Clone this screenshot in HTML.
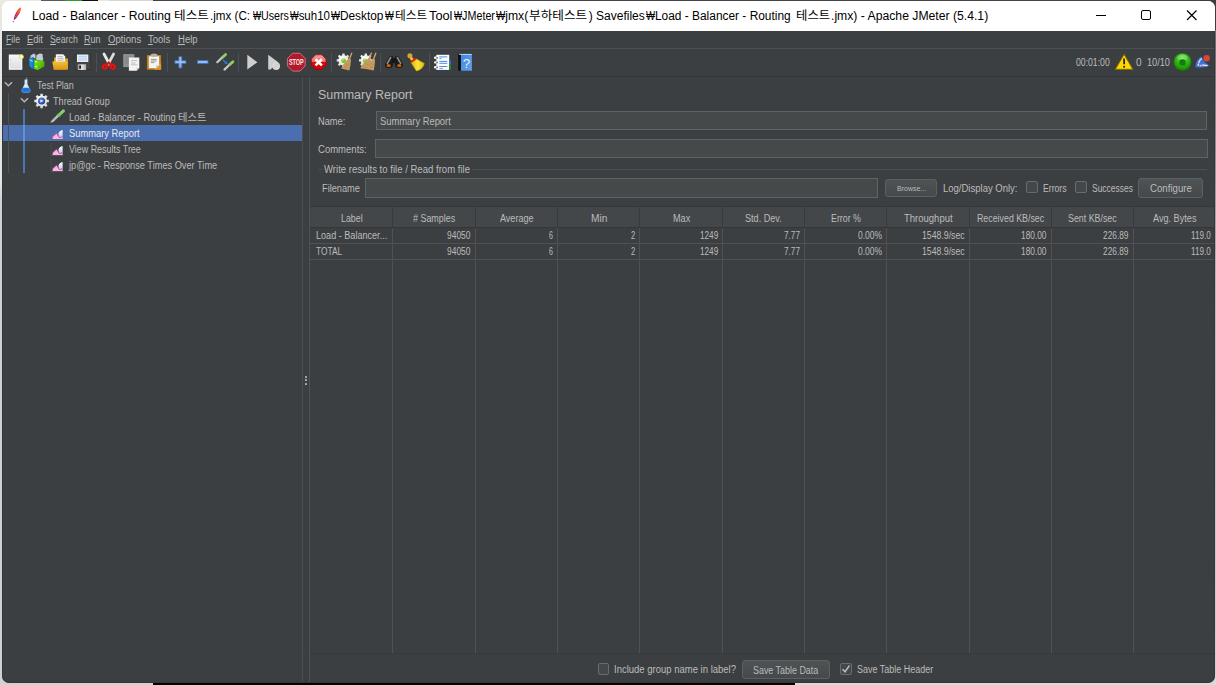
<!DOCTYPE html>
<html lang="ko"><head><meta charset="utf-8"><title>Apache JMeter</title>
<style>
html,body{margin:0;padding:0}
body{width:1216px;height:685px;overflow:hidden;position:relative;background:#e9e6dc;font-family:"Liberation Sans","Noto Sans CJK KR",sans-serif;font-size:10px;color:#bbbbbb}
#win{position:absolute;left:2px;top:1px;width:1213px;height:682px;border-radius:7px;background:linear-gradient(#fff 0,#fff 30px,#3c3f41 30px);overflow:hidden}
#in{position:absolute;left:-2px;top:-1px;width:1216px;height:685px}
#in div,#in span,#in svg{position:absolute}
.t{white-space:nowrap;line-height:12px;height:12px;margin-top:-9px;font-size:10px;transform-origin:0 0}
.h{white-space:nowrap;line-height:16px;height:16px;margin-top:-12px;font-size:12.5px;transform-origin:0 0}
.s{white-space:nowrap;line-height:10px;height:10px;margin-top:-8px;font-size:8px;transform-origin:0 0}
.tt{white-space:nowrap;line-height:16px;height:16px;margin-top:-12.5px;font-size:12px;color:#000;transform-origin:0 0}
.fld{background:#45494a;border:1px solid #606365;box-sizing:border-box}
.btn{box-sizing:border-box;border:1px solid #5e6060;border-radius:3px;background:linear-gradient(#4e5355,#45494b)}
.cb{box-sizing:border-box;border:1px solid #6b6b6b;border-radius:2px;background:#43494a;width:12px;height:12px}
.vl{width:1px;background:#4f5254}
.hl{height:1px;background:#4f5254}
.sep{width:1px;background:#4c4f51;top:53px;height:19px}
u{text-decoration:underline;text-underline-offset:1px}
.w{font-style:normal;display:inline-block;transform:scaleX(.8);transform-origin:0 50%;margin-right:-2.3px}
</style></head>
<body>
<div style="position:absolute;left:0;top:0;width:1216px;height:2px;background:linear-gradient(90deg,#ebe8dc 0,#ebe8dc 41px,#5a5a5a 41px,#5a5a5a 65px,#2c9a3c 65px,#2c9a3c 82px,#111 82px,#111 98px,#ebe8dc 98px,#ebe8dc 109px,#d6d6d6 109px,#d6d6d6 153px,#414446 153px,#414446 100%)"></div>
<div style="position:absolute;left:0;top:2px;width:4px;height:683px;background:linear-gradient(#e8e8e4 0,#e4e4e2 180px,#d0d0d0 200px,#d0d0d0 100%)"></div>
<div style="position:absolute;left:0;top:0;width:12px;height:12px;background:#ebe8dc"></div>
<div style="position:absolute;left:1200px;top:0;width:16px;height:30px;background:#3b3e40"></div>
<div style="position:absolute;left:1214px;top:30px;width:2px;height:655px;background:linear-gradient(#6a6d6f,#b8b8b8 40%,#cfcfcf)"></div>
<div style="position:absolute;left:0;top:675px;width:153px;height:10px;background:#d2d2d2"></div>
<div style="position:absolute;left:153px;top:675px;width:642px;height:10px;background:#000"></div>
<div style="position:absolute;left:795px;top:675px;width:421px;height:10px;background:#dadada"></div>
<div id="win"><div id="in">
<div style="left:0;top:0;width:1216px;height:31px;background:#fff"></div>
<svg style="left:11px;top:6px" width="14" height="20" viewBox="0 0 14 20"><defs><linearGradient id="fg" x1="1" y1="0" x2="0" y2="1"><stop offset="0" stop-color="#f7941e"/><stop offset="0.45" stop-color="#e2263a"/><stop offset="1" stop-color="#7b2a8c"/></linearGradient></defs><path d="M9.7 1.5 C10.7 1.9 9.7 5 8.1 8 C6.7 10.6 5 12.7 3.4 13.9 L2.7 13.3 C3.1 10.6 4.4 7.6 6 5 C7.2 3.1 8.9 1.2 9.7 1.5 Z" fill="url(#fg)"/><path d="M4 10.4l2.4 1M4.8 8.4l2.6 1M5.8 6.4l2.6 1M6.8 4.6l2.4 0.9" stroke="#fff" stroke-opacity="0.55" stroke-width="0.5"/><circle cx="2.3" cy="15.6" r="0.65" fill="#7b2a8c"/></svg>
<span class="tt" style="left:31.5px;top:20px;transform:scaleX(1.0143);">Load - Balancer - Routing</span>
<span class="tt" style="left:174.25px;top:20px;transform:scaleX(1.0551);">테스트</span>
<span class="tt" style="left:210.2px;top:20px;transform:scaleX(0.9679);">.jmx (C:</span>
<span class="tt" style="left:252.5px;top:20px;transform:scaleX(0.8904);"><i class="w">₩</i>Users</span>
<span class="tt" style="left:289.8px;top:20px;transform:scaleX(0.956);"><i class="w">₩</i>suh10</span>
<span class="tt" style="left:331px;top:20px;transform:scaleX(0.9885);"><i class="w">₩</i>Desktop</span>
<span class="tt" style="left:385px;top:20px;transform:scaleX(0.9633);"><i class="w">₩</i></span>
<span class="tt" style="left:395px;top:20px;transform:scaleX(0.9721);">테스트</span>
<span class="tt" style="left:428.75px;top:20px;transform:scaleX(1.0652);">Tool</span>
<span class="tt" style="left:453.75px;top:20px;transform:scaleX(0.8957);"><i class="w">₩</i>JMeter</span>
<span class="tt" style="left:496px;top:20px;transform:scaleX(1.0157);"><i class="w">₩</i>jmx(</span>
<span class="tt" style="left:529px;top:20px;transform:scaleX(1.0543);">부하테스트</span>
<span class="tt" style="left:588.75px;top:20px;">) Savefiles</span>
<span class="tt" style="left:645.6px;top:20px;transform:scaleX(0.9926);"><i class="w">₩</i>Load - Balancer - Routing</span>
<span class="tt" style="left:795.5px;top:20px;transform:scaleX(1.0325);">테스트</span>
<span class="tt" style="left:830.7px;top:20px;transform:scaleX(1.016);">.jmx) - Apache JMeter (5.4.1)</span>
<svg style="left:1090px;top:5px" width="115" height="22" viewBox="1090 5 115 22"><path d="M1096 15.5h10" stroke="#000" stroke-width="1"/><rect x="1141.5" y="10.5" width="9" height="9" rx="1.5" fill="none" stroke="#000" stroke-width="1"/><path d="M1187 10.5l9.5 9.5M1196.5 10.5l-9.5 9.5" stroke="#000" stroke-width="1.2"/></svg>
<span class="t" style="left:5.5px;top:43px;transform:scaleX(0.8651);"><u>F</u>ile</span>
<span class="t" style="left:26.9px;top:43px;transform:scaleX(0.9226);"><u>E</u>dit</span>
<span class="t" style="left:50px;top:43px;transform:scaleX(0.8773);"><u>S</u>earch</span>
<span class="t" style="left:84.4px;top:43px;transform:scaleX(0.9014);"><u>R</u>un</span>
<span class="t" style="left:107.75px;top:43px;transform:scaleX(0.9632);"><u>O</u>ptions</span>
<span class="t" style="left:148.1px;top:43px;transform:scaleX(0.9504);"><u>T</u>ools</span>
<span class="t" style="left:178.1px;top:43px;transform:scaleX(0.9517);"><u>H</u>elp</span>
<div class="hl" style="left:0;top:48px;width:1216px;background:#4d5052"></div>
<div class="hl" style="left:0;top:76px;width:1216px;background:#323537"></div>
<div class="sep" style="left:96px"></div>
<div class="sep" style="left:167px"></div>
<div class="sep" style="left:238px"></div>
<div class="sep" style="left:331px"></div>
<div class="sep" style="left:380px"></div>
<div class="sep" style="left:429px"></div>
<svg style="left:0;top:49px" width="480" height="27" viewBox="0 49 480 27">
<defs>
<linearGradient id="gPage" x1="0" y1="0" x2="0" y2="1"><stop offset="0" stop-color="#f6f6f6"/><stop offset="1" stop-color="#dedede"/></linearGradient>
<radialGradient id="gStar"><stop offset="0" stop-color="#ffffff"/><stop offset="0.3" stop-color="#fff6b8"/><stop offset="0.7" stop-color="#f4de62"/><stop offset="1" stop-color="#ead458" stop-opacity="0"/></radialGradient>
<linearGradient id="gFold" x1="0" y1="0" x2="0" y2="1"><stop offset="0" stop-color="#f3c045"/><stop offset="1" stop-color="#d8960c"/></linearGradient>
<linearGradient id="gBlue" x1="0" y1="0" x2="1" y2="0"><stop offset="0" stop-color="#1fa0e8"/><stop offset="1" stop-color="#1468c0"/></linearGradient>
<linearGradient id="gGreen" x1="0" y1="0" x2="1" y2="1"><stop offset="0" stop-color="#7fe000"/><stop offset="1" stop-color="#2f9a08"/></linearGradient>
<linearGradient id="gSilver" x1="0" y1="0" x2="1" y2="0"><stop offset="0" stop-color="#9a9a9a"/><stop offset="0.5" stop-color="#e6e6e6"/><stop offset="1" stop-color="#b0b0b0"/></linearGradient>
<linearGradient id="gPlus" x1="0" y1="0" x2="0" y2="1"><stop offset="0" stop-color="#a9c8f2"/><stop offset="1" stop-color="#8ab2e8"/></linearGradient>
<linearGradient id="gRedX" x1="0" y1="0" x2="0" y2="1"><stop offset="0" stop-color="#f6a0a0"/><stop offset="0.48" stop-color="#ee6a6a"/><stop offset="0.52" stop-color="#dc0a0a"/><stop offset="1" stop-color="#d80000"/></linearGradient>
<linearGradient id="gGlass" x1="0" y1="0" x2="1" y2="1"><stop offset="0" stop-color="#f4f4f4"/><stop offset="1" stop-color="#9c9c9c"/></linearGradient>
<linearGradient id="gYel" x1="0" y1="0" x2="1" y2="0"><stop offset="0" stop-color="#d8b400"/><stop offset="0.5" stop-color="#fae43a"/><stop offset="1" stop-color="#e0be10"/></linearGradient>
<linearGradient id="gHelp" x1="0" y1="0" x2="1" y2="1"><stop offset="0" stop-color="#3f86dc"/><stop offset="1" stop-color="#62a2ec"/></linearGradient>
<radialGradient id="gGear" cx="0.4" cy="0.35" r="0.7"><stop offset="0" stop-color="#ffffff"/><stop offset="1" stop-color="#d4d4d4"/></radialGradient>
<radialGradient id="gGball" cx="0.4" cy="0.3" r="0.7"><stop offset="0" stop-color="#b8f060"/><stop offset="1" stop-color="#48b000"/></radialGradient>
</defs>
<!-- 1 new -->
<rect x="8.8" y="54.5" width="13.5" height="15.3" fill="#fafafa"/><rect x="9.7" y="55.4" width="11.7" height="13.2" fill="url(#gPage)"/>
<circle cx="10.6" cy="60" r="0.6" fill="#b8b8b8"/><circle cx="10.6" cy="64" r="0.6" fill="#b8b8b8"/>
<circle cx="21.4" cy="56.8" r="2.8" fill="url(#gStar)"/>
<!-- 2 templates (books) -->
<path d="M40 56.4 L43.2 57.4 L43.2 61.4 L40 60.6 Z" fill="#4aa6e6"/><path d="M30.3 58 L30.6 55.4 L33.8 53.5 L35.4 54.6 L35.6 58.8 L33 57.4 Z" fill="#c6cbcf"/><path d="M36.2 59.8 L36.4 55.2 L39.6 53.5 L42.6 54 L42.8 60.6 L38.2 60.2 Z" fill="#c6cbcf"/>
<path d="M29.1 58.4 L33 57.2 L34.7 58.2 L34.7 69.2 L31 67.8 L29.7 66 Z" fill="url(#gBlue)"/>
<path d="M30.2 59.6l2.4 1.2v1l-2.4-1.2z" fill="#d8efff"/>
<path d="M34.2 59.4 L38.1 60.2 L38.1 70 L34.2 69 Z" fill="#62d808"/>
<path d="M38.1 60.2 L44.4 61.6 L44.4 66.4 L38.1 70 Z" fill="url(#gGreen)"/>
<path d="M35 61l2.2 0.4v1.2l-2.2-0.4zM35 66l2.2 0.4v0.9l-2.2-0.4z" fill="#e4ffc0"/>
<!-- 3 open folder -->
<path d="M54 57.4 h5 l1 1 h8 v11 h-14 z" fill="#e0a21a"/>
<path d="M55.8 54.2 h7.4 l2 2.2 v6 h-9.4 z" fill="#f6f6f6"/>
<path d="M57.4 56.6h5.6M57.4 58.4h6.2M57.4 60.2h6.2" stroke="#a8a8a8" stroke-width="0.8"/>
<path d="M52.3 61.5 h14.6 l0.6 1 l-0.8 7.3 h-13 z" fill="url(#gFold)"/>
<!-- 4 save floppy -->
<path d="M75 54.2 h15 l0.9 0.9 v14.7 h-15.9 z" fill="#454545"/>
<path d="M75 54.2 h15 l0.9 0.9 v14.7 h-15.9 z" fill="none" stroke="#2e2e2e" stroke-width="0.6"/>
<rect x="77" y="54.5" width="11.3" height="7.5" fill="#e6eff9"/>
<path d="M78.4 56.4h8.6M78.4 58.2h8.6M78.4 60h8.6" stroke="#a9c4e2" stroke-width="0.8"/>
<rect x="77.8" y="64.3" width="8.3" height="5.7" fill="url(#gSilver)"/>
<rect x="79.2" y="65.5" width="1.8" height="3.2" rx="0.6" fill="#161616"/>
<!-- 5 cut -->
<path d="M104 54 L109.4 64" stroke="#e8e8e8" stroke-width="2.7" stroke-linecap="round"/>
<path d="M113.6 54 L108.2 64" stroke="#dcdcdc" stroke-width="2.7" stroke-linecap="round"/>
<ellipse cx="105" cy="66.7" rx="2.2" ry="1.8" transform="rotate(-35 105 66.7)" fill="#7a1a1a" stroke="#e01414" stroke-width="2.3"/>
<ellipse cx="112.6" cy="66.7" rx="2.2" ry="1.8" transform="rotate(35 112.6 66.7)" fill="#7a1a1a" stroke="#e01414" stroke-width="2.3"/>
<path d="M106.8 64.8 L108.8 62.6 L110.8 64.8" fill="none" stroke="#e01414" stroke-width="2.2"/>
<!-- 6 copy -->
<rect x="123.2" y="54.1" width="11.1" height="13" fill="#8f9293"/>
<path d="M124.8 57h8M124.8 59h8M124.8 61h8M124.8 63h8" stroke="#7e8182" stroke-width="0.8"/>
<path d="M128.9 57.4 h10.4 v10.6 l-2.6 2.7 h-7.8 z" fill="#f3f3f3"/>
<path d="M139.3 68 l-2.6 2.7 v-2.7 z" fill="#b8b8b8"/>
<path d="M131 60.6h6.2M131 63h4.6M131 64.8h6.2" stroke="#bdbdbd" stroke-width="1"/>
<!-- 7 paste -->
<rect x="146.9" y="55.1" width="14.2" height="14.7" rx="0.8" fill="#c07c12"/>
<path d="M161.1 63 v6.8 h-7 z" fill="#dc962a"/>
<path d="M148.8 56.2 h10.4 v9 l-3 3 h-7.4 z" fill="#f4f4f4"/>
<path d="M159.2 65.2 l-3 3 v-3 z" fill="#c8c8c0"/>
<path d="M150.8 59.4h5.8M150.8 61h5.8M150.8 62.6h3.6" stroke="#8c8c8c" stroke-width="0.9"/>
<ellipse cx="154" cy="55.2" rx="3.4" ry="1.6" fill="#b2b2a6"/>
<!-- 8 plus -->
<path d="M178.9 56.7 h2.9 v4 h4.2 v2.8 h-4.2 v4.4 h-2.9 v-4.4 h-4 v-2.8 h4 z" fill="url(#gPlus)" stroke="#3f70b8" stroke-width="0.9"/>
<!-- 9 minus -->
<rect x="197.4" y="60.6" width="10.6" height="3" fill="url(#gPlus)" stroke="#3f70b8" stroke-width="0.9"/>
<!-- 10 toggle -->
<path d="M217.3 62.2 L222.4 57.4" stroke="url(#gGlass)" stroke-width="2.2" stroke-linecap="round"/>
<path d="M222.6 57.2 L225.6 54.4" stroke="#8fcf60" stroke-width="2.8" stroke-linecap="round"/>
<path d="M224.5 69.6 L229.6 64.8" stroke="url(#gGlass)" stroke-width="2.2" stroke-linecap="round"/>
<path d="M229.8 64.6 L232.9 61.7" stroke="#8fcf60" stroke-width="2.8" stroke-linecap="round"/>
<path d="M223 60 L225.6 62.4" stroke="#3c82e0" stroke-width="1.1"/>
<path d="M227.6 64.2 L224.2 63.6 L226.8 60.8 Z" fill="#2a7ae4"/>
<!-- 11 play -->
<path d="M247.3 54.8 L257.4 62.2 L247.3 69.5 Z" fill="#cecece"/>
<!-- 12 play no pause -->
<path d="M268.2 54.8 L278 62 L271.6 68.4 L270.8 69.5 L268.2 69.5 Z" fill="#cecece"/>
<circle cx="276.1" cy="66" r="3.9" fill="#d6d6d6"/>
<path d="M273.6 68.2 L278.4 63.6" stroke="#c4c4c4" stroke-width="0.9"/>
<!-- 13 stop -->
<path d="M292.6 53.3 h7.4 l5.2 5.2 v7.4 l-5.2 5.2 h-7.4 l-5.2 -5.2 v-7.4 z" fill="#b2192b" stroke="#e2909a" stroke-width="0.7"/>
<text x="288.9" y="65.2" font-family="Liberation Sans, sans-serif" font-weight="bold" font-size="8.4" fill="#fbeaea" textLength="14.8" lengthAdjust="spacingAndGlyphs">STOP</text>
<!-- 14 shutdown -->
<path d="M315.6 54.8 h6.2 l4.2 4.2 v6.1 l-4.2 4.2 h-6.2 l-4.2 -4.2 v-6.1 z" fill="url(#gRedX)" stroke="#a80000" stroke-width="0.7"/>
<path d="M315.5 59.2 L321.9 65.4 M321.9 59.2 L315.5 65.4" stroke="#ffffff" stroke-width="2.6"/>
<!-- 15 clear -->
<path d="M342.4 53.6 L344.6 53.6 L344.7 55.3 L346.2 56.0 L347.6 54.8 L349.1 56.3 L347.9 57.7 L348.6 59.2 L350.3 59.3 L350.3 61.5 L348.6 61.6 L347.9 63.1 L349.1 64.5 L347.6 66.0 L346.2 64.8 L344.7 65.5 L344.6 67.2 L342.4 67.2 L342.3 65.5 L340.8 64.8 L339.4 66.0 L337.9 64.5 L339.1 63.1 L338.4 61.6 L336.7 61.5 L336.7 59.3 L338.4 59.2 L339.1 57.7 L337.9 56.3 L339.4 54.8 L340.8 56.0 L342.3 55.3 Z" fill="url(#gGear)"/>
<circle cx="343.5" cy="60.6" r="2.3" fill="url(#gGball)"/>
<path d="M351.7 53.2 L349.2 59.4" stroke="#caa26a" stroke-width="1.4" stroke-linecap="round"/>
<path d="M349 58.2 L350.8 59.4 L350.6 64 L349.4 70.6 L341.2 68.4 L343.6 64 L346.6 60.4 Z" fill="#c59c5e"/>
<path d="M344 66.5l4 1.2M345.6 63.6l3.6 1.4" stroke="#a9814a" stroke-width="0.6"/>
<!-- 16 clear all -->
<path d="M364.7 53.6 L366.9 53.6 L367.0 55.3 L368.5 56.0 L369.9 54.8 L371.4 56.3 L370.2 57.7 L370.9 59.2 L372.6 59.3 L372.6 61.5 L370.9 61.6 L370.2 63.1 L371.4 64.5 L369.9 66.0 L368.5 64.8 L367.0 65.5 L366.9 67.2 L364.7 67.2 L364.6 65.5 L363.1 64.8 L361.7 66.0 L360.2 64.5 L361.4 63.1 L360.7 61.6 L359.0 61.5 L359.0 59.3 L360.7 59.2 L361.4 57.7 L360.2 56.3 L361.7 54.8 L363.1 56.0 L364.6 55.3 Z" fill="url(#gGear)"/>
<circle cx="364.9" cy="60.6" r="2.2" fill="url(#gGball)"/>
<path d="M371.3 53.2 L368.9 59.4 M375.8 53.2 L373.4 59.4" stroke="#caa26a" stroke-width="1.4" stroke-linecap="round"/>
<path d="M368.6 58.2 L370.4 59.4 L371.8 61.2 L373 58.4 L375 59.6 L374.8 64 L373.8 70.6 L368.8 69.6 L360.2 68.2 L363.2 63.6 L366.2 60.4 Z" fill="#c59c5e"/>
<path d="M363.6 66.5l4 1.2M365.2 63.6l3.6 1.4M369.6 66.6l3.4 1M370.6 63.6l3 1" stroke="#a9814a" stroke-width="0.6"/>
<!-- 17 search binoculars -->
<path d="M389.6 56.2 L392.9 56.2 L393.7 61 L392.4 67 Q388.7 69.2 385.3 66.8 Q384.7 64.8 385.5 63.2 Z" fill="#1a1a1a"/>
<path d="M398.4 56.2 L395.1 56.2 L394.3 61 L395.6 67 Q399.3 69.2 402.7 66.8 Q403.3 64.8 402.5 63.2 Z" fill="#1a1a1a"/>
<rect x="392.3" y="58.2" width="3.4" height="4.6" fill="#151515"/>
<path d="M390.6 57.6 L387.4 63.4" stroke="#8e8e8e" stroke-width="1.7" stroke-linecap="round"/>
<path d="M397.4 57.6 L400.6 63.4" stroke="#8e8e8e" stroke-width="1.7" stroke-linecap="round"/>
<ellipse cx="388.7" cy="65.5" rx="2.1" ry="1.6" fill="#c8660c"/>
<ellipse cx="399.3" cy="65.5" rx="2.1" ry="1.6" fill="#c8660c"/>
<!-- 18 reset search broom -->
<path d="M411 62.4 L416 58.8 L424.3 63.5 Q423 69.4 416.4 71 Z" fill="url(#gYel)" stroke="#c8a400" stroke-width="0.6"/>
<path d="M409.4 57.6 L411.2 56.4 L414.4 59.4 L411.6 61.4 Z" fill="#f0d420"/>
<circle cx="409.9" cy="55.7" r="2.5" fill="#dea238"/>
<path d="M410.9 62 L415.9 58.5" stroke="#dc1c1c" stroke-width="2.1"/>
<!-- 19 function helper -->
<rect x="436.3" y="54.8" width="12.9" height="15.1" fill="#fdfdfd"/>
<rect x="449.2" y="60.5" width="1.8" height="4.1" fill="#2d6fd8"/>
<rect x="449.2" y="64.6" width="1.8" height="4.9" fill="#1f8a12"/>
<g fill="#f2f2f2"><rect x="434" y="56.6" width="3.2" height="2.4" rx="1"/><rect x="434" y="61.2" width="3.2" height="2.4" rx="1"/><rect x="434" y="66.1" width="3.2" height="2.4" rx="1"/></g>
<g fill="#222"><rect x="436.6" y="57" width="1" height="1.7"/><rect x="436.6" y="61.6" width="1" height="1.7"/><rect x="436.6" y="66.5" width="1" height="1.7"/></g>
<path d="M439.3 56.9h8M439.3 61.4h8M439.3 63.3h8M439.3 66.5h8" stroke="#4a8cee" stroke-width="1"/>
<path d="M439.3 58.4h2.4M439.3 68.4h3.8" stroke="#6aa2f2" stroke-width="1"/>
<!-- 20 help -->
<rect x="458.2" y="54" width="2.9" height="16.7" fill="#0c0c0c"/>
<rect x="460.9" y="54" width="11" height="16.7" fill="url(#gHelp)"/>
<path d="M459 54.4 h12.6" stroke="#dfe8f4" stroke-width="0.8"/>
<text x="462.8" y="68" font-family="Liberation Sans, sans-serif" font-size="13.5" fill="#e6f0ff">?</text>
</svg>
<svg style="left:1110px;top:49px" width="105" height="27" viewBox="1110 49 105 27">
<defs>
<radialGradient id="gGrn" cx="0.5" cy="0.3" r="0.75"><stop offset="0" stop-color="#6fe04a"/><stop offset="0.55" stop-color="#2fae12"/><stop offset="1" stop-color="#0e7a06"/></radialGradient>
</defs>
<path d="M1124.1 54.4 L1132.8 69.3 H1115.4 Z" fill="#ffd800" stroke="#8c6c00" stroke-width="1" stroke-linejoin="round"/>
<path d="M1124.1 58.6 v5.6" stroke="#1a1a1a" stroke-width="1.7"/><circle cx="1124.1" cy="66.7" r="1" fill="#1a1a1a"/>
<circle cx="1182.5" cy="61.9" r="8.9" fill="url(#gGrn)"/>
<circle cx="1182.5" cy="61.9" r="8.6" fill="none" stroke="#0f6e08" stroke-width="0.7"/>
<ellipse cx="1182.5" cy="57.6" rx="5.2" ry="3" fill="#ffffff" fill-opacity="0.22"/><circle cx="1182.5" cy="62.4" r="3.2" fill="#127c0d"/>
<path d="M1195.6 67.4 C1195.2 62.6 1198 58.4 1201.4 56.6 L1203.2 59.4 C1203.6 62 1207.6 64 1209.4 65.4 C1206 67.6 1200 67.8 1195.6 67.4 Z" fill="#3b74d6"/>
<path d="M1198 65.8 C1198.6 62 1200 59.6 1201.8 58.4 M1199.6 66 C1202 64.8 1205 65 1207.6 65.6" stroke="#e8eefc" stroke-width="1.2" fill="none"/>
<path d="M1197.4 62.6 L1203 66.6" stroke="#e05a6a" stroke-width="0.7"/>
<circle cx="1206.6" cy="58.3" r="3.2" fill="#dc4437"/>
</svg>

<span class="t" style="left:1076px;top:66px;transform:scaleX(0.8655);">00:01:00</span>
<span class="t" style="left:1136px;top:66px;">0</span>
<span class="t" style="left:1147px;top:66px;transform:scaleX(0.9149);">10/10</span>
<div style="left:0;top:125px;width:302px;height:16px;background:#4b6eaf"></div>
<div class="vl" style="left:7.5px;top:93px;height:79.5px;background:#505355"></div>
<div style="left:23.2px;top:108.5px;width:1.7px;height:64.5px;background:#4878ae"></div>
<div style="left:23.2px;top:125px;width:1.7px;height:16px;background:#5e94d4"></div>
<svg style="left:4px;top:81px" width="9" height="7" viewBox="0 0 9 7"><path d="M0.8 1.2L4.4 4.8L8 1.2" fill="none" stroke="#b4b4b4" stroke-width="1.5"/></svg>
<svg style="left:20px;top:97px" width="9" height="7" viewBox="0 0 9 7"><path d="M0.8 1.2L4.4 4.8L8 1.2" fill="none" stroke="#b4b4b4" stroke-width="1.5"/></svg>
<span class="t" style="left:37px;top:89px;transform:scaleX(0.8945);">Test Plan</span>
<span class="t" style="left:53px;top:105px;transform:scaleX(0.9106);">Thread Group</span>
<span class="t" style="left:68.5px;top:121px;transform:scaleX(0.9362);">Load - Balancer - Routing</span>
<span class="t" style="left:178.3px;top:121px;transform:scaleX(1.0286);">테스트</span>
<span class="t" style="left:68.5px;top:137px;color:#e6e9ef;transform:scaleX(0.9341);">Summary Report</span>
<span class="t" style="left:68.5px;top:153px;transform:scaleX(0.893);">View Results Tree</span>
<span class="t" style="left:68.5px;top:169px;transform:scaleX(0.9218);">jp@gc - Response Times Over Time</span>
<svg style="left:0;top:77px" width="80" height="100" viewBox="0 77 80 100">
<defs>
<linearGradient id="tGlass" x1="0" y1="0" x2="1" y2="1"><stop offset="0" stop-color="#f6f6f6"/><stop offset="1" stop-color="#8c8c8c"/></linearGradient>
<radialGradient id="tGear" cx="0.4" cy="0.35" r="0.7"><stop offset="0" stop-color="#ffffff"/><stop offset="1" stop-color="#d2d2d2"/></radialGradient>
<radialGradient id="tBlue" cx="0.4" cy="0.35" r="0.7"><stop offset="0" stop-color="#5a8ae0"/><stop offset="1" stop-color="#1c3f90"/></radialGradient>
</defs>
<!-- flask -->
<path d="M26.6 77.4 L26.9 79.6" stroke="#9a9a9a" stroke-width="0.8"/>
<path d="M24.6 79.4 h2.8 v4.6 l3 6.2 q0.4 2 -1.4 2.2 h-6 q-1.8 -0.2 -1.4 -2.2 l3 -6.2 z" fill="#d6e8f8"/>
<path d="M22.6 87.8 h6.8 l1 2.4 q0.4 2 -1.4 2.2 h-6 q-1.8 -0.2 -1.4 -2.2 z" fill="#1f7ae4"/>
<path d="M24.8 88.6 v2 M27.2 88.6 v2" stroke="#1458b8" stroke-width="0.8"/>
<!-- gear -->
<path d="M40.4 93.7 L42.8 93.7 L42.9 95.7 L44.5 96.3 L45.9 95.0 L47.6 96.7 L46.3 98.1 L46.9 99.7 L48.9 99.8 L48.9 102.2 L46.9 102.3 L46.3 103.9 L47.6 105.3 L45.9 107.0 L44.5 105.7 L42.9 106.3 L42.8 108.3 L40.4 108.3 L40.3 106.3 L38.7 105.7 L37.3 107.0 L35.6 105.3 L36.9 103.9 L36.3 102.3 L34.3 102.2 L34.3 99.8 L36.3 99.7 L36.9 98.1 L35.6 96.7 L37.3 95.0 L38.7 96.3 L40.3 95.7 Z" fill="url(#tGear)"/>
<circle cx="41.6" cy="101" r="3.6" fill="url(#tBlue)"/>
<path d="M40.4 99.4 L43.6 100.9 L40.4 102.6 Z" fill="#eef2fa"/>
<!-- dropper -->
<path d="M50.2 122.8 L51.8 120.2 L57.5 114.5 L59.3 116.3 L53.4 121.9 Z" fill="url(#tGlass)"/>
<path d="M57.2 113.9 L60 116.7" stroke="#58a845" stroke-width="1.5"/>
<path d="M59.4 114.7 L63.5 110.9" stroke="#7fcc62" stroke-width="3" stroke-linecap="round"/>
<path d="M61 112.4 L63 110.6" stroke="#a6e08e" stroke-width="1" stroke-linecap="round"/>
<path d="M53 118.6l1.5 1.5M54.6 117l1.5 1.5" stroke="#8a8a8a" stroke-width="0.5"/>
</svg>
<svg width="0" height="0" style="left:0;top:0"><defs><linearGradient id="lf" x1="0" y1="0" x2="0" y2="1"><stop offset="0" stop-color="#ffffff"/><stop offset="1" stop-color="#a6c8fa"/></linearGradient></defs></svg>
<svg style="left:50px;top:125px" width="15" height="16" viewBox="0 0 15 16"><path d="M1.1 2v12.6" stroke="#5d6164" stroke-opacity="0.8" stroke-width="0.8" stroke-dasharray="1 1"/><path d="M1 14.5h12.6" stroke="#6a6e72" stroke-opacity="0.7" stroke-width="0.7"/><path d="M8.3 9 C8.8 6.8 10.6 5.4 12.6 5 L12.6 12 L9.7 13.4 Z" fill="url(#lf)"/><path d="M2.7 14 L2.7 11.6 L6.4 8.2 L9.7 12.6 L12.6 11.2 L12.6 14 Z" fill="#fab4ea" stroke="#d23c86" stroke-width="0" /><path d="M2.7 11.8 L6.4 8.4 L9.7 12.8 L12.6 11.4" fill="none" stroke="#d8408c" stroke-width="0.9"/></svg>
<svg style="left:50px;top:141px" width="15" height="16" viewBox="0 0 15 16"><path d="M1.1 2v12.6" stroke="#5d6164" stroke-opacity="0.8" stroke-width="0.8" stroke-dasharray="1 1"/><path d="M1 14.5h12.6" stroke="#6a6e72" stroke-opacity="0.7" stroke-width="0.7"/><path d="M8.3 9 C8.8 6.8 10.6 5.4 12.6 5 L12.6 12 L9.7 13.4 Z" fill="url(#lf)"/><path d="M2.7 14 L2.7 11.6 L6.4 8.2 L9.7 12.6 L12.6 11.2 L12.6 14 Z" fill="#fab4ea" stroke="#d23c86" stroke-width="0" /><path d="M2.7 11.8 L6.4 8.4 L9.7 12.8 L12.6 11.4" fill="none" stroke="#d8408c" stroke-width="0.9"/></svg>
<svg style="left:50px;top:157px" width="15" height="16" viewBox="0 0 15 16"><path d="M1.1 2v12.6" stroke="#5d6164" stroke-opacity="0.8" stroke-width="0.8" stroke-dasharray="1 1"/><path d="M1 14.5h12.6" stroke="#6a6e72" stroke-opacity="0.7" stroke-width="0.7"/><path d="M8.3 9 C8.8 6.8 10.6 5.4 12.6 5 L12.6 12 L9.7 13.4 Z" fill="url(#lf)"/><path d="M2.7 14 L2.7 11.6 L6.4 8.2 L9.7 12.6 L12.6 11.2 L12.6 14 Z" fill="#fab4ea" stroke="#d23c86" stroke-width="0" /><path d="M2.7 11.8 L6.4 8.4 L9.7 12.8 L12.6 11.4" fill="none" stroke="#d8408c" stroke-width="0.9"/></svg>
<div class="vl" style="left:302px;top:77px;height:606px;background:#4c4f51"></div>
<div class="vl" style="left:309px;top:77px;height:606px;background:#505355"></div>
<div style="left:304.8px;top:375.6px;width:2.3px;height:2px;background:#adadad;border-radius:0.6px"></div>
<div style="left:304.8px;top:379.1px;width:2.3px;height:2px;background:#adadad;border-radius:0.6px"></div>
<div style="left:304.8px;top:382.9px;width:2.3px;height:2px;background:#adadad;border-radius:0.6px"></div>
<span class="h" style="left:318px;top:99px;">Summary Report</span>
<span class="t" style="left:318px;top:125px;transform:scaleX(0.9269);">Name:</span>
<div class="fld" style="left:376px;top:111px;width:831px;height:19px"></div>
<span class="t" style="left:379.5px;top:125px;transform:scaleX(0.9368);">Summary Report</span>
<span class="t" style="left:318px;top:153px;transform:scaleX(0.9526);">Comments:</span>
<div class="fld" style="left:374.5px;top:139px;width:833.5px;height:19px"></div>
<div class="hl" style="left:318px;top:168.5px;width:4px;background:#4c4f51"></div>
<div class="hl" style="left:472px;top:168.5px;width:735px;background:#4c4f51"></div>
<span class="t" style="left:323.7px;top:173px;transform:scaleX(0.9564);">Write results to file / Read from file</span>
<span class="t" style="left:321.5px;top:192px;transform:scaleX(0.9224);">Filename</span>
<div class="fld" style="left:365px;top:178px;width:513px;height:19.5px"></div>
<div class="btn" style="left:885px;top:179px;width:52px;height:18px"></div>
<span class="s" style="left:896.5px;top:192px;transform:scaleX(0.8757);">Browse...</span>
<span class="t" style="left:942.7px;top:192px;transform:scaleX(0.9506);">Log/Display Only:</span>
<div class="cb" style="left:1026px;top:181px"></div>
<span class="t" style="left:1042.5px;top:192px;transform:scaleX(0.8666);">Errors</span>
<div class="cb" style="left:1075px;top:181px"></div>
<span class="t" style="left:1091.7px;top:192px;transform:scaleX(0.8458);">Successes</span>
<div class="btn" style="left:1138px;top:178px;width:65px;height:19.5px"></div>
<span class="t" style="left:1150px;top:192px;transform:scaleX(0.9663);">Configure</span>
<div style="left:310px;top:207px;width:905px;height:20px;background:#43474a"></div>
<div class="hl" style="left:310px;top:206px;width:905px;background:#34373a"></div>
<div class="hl" style="left:310px;top:227px;width:905px;background:#34373a"></div>
<div class="vl" style="left:392px;top:207px;height:20px;background:#383b3d"></div>
<div class="vl" style="left:392px;top:228px;height:425px"></div>
<div class="vl" style="left:475px;top:207px;height:20px;background:#383b3d"></div>
<div class="vl" style="left:475px;top:228px;height:425px"></div>
<div class="vl" style="left:557px;top:207px;height:20px;background:#383b3d"></div>
<div class="vl" style="left:557px;top:228px;height:425px"></div>
<div class="vl" style="left:639px;top:207px;height:20px;background:#383b3d"></div>
<div class="vl" style="left:639px;top:228px;height:425px"></div>
<div class="vl" style="left:722px;top:207px;height:20px;background:#383b3d"></div>
<div class="vl" style="left:722px;top:228px;height:425px"></div>
<div class="vl" style="left:804px;top:207px;height:20px;background:#383b3d"></div>
<div class="vl" style="left:804px;top:228px;height:425px"></div>
<div class="vl" style="left:886px;top:207px;height:20px;background:#383b3d"></div>
<div class="vl" style="left:886px;top:228px;height:425px"></div>
<div class="vl" style="left:969px;top:207px;height:20px;background:#383b3d"></div>
<div class="vl" style="left:969px;top:228px;height:425px"></div>
<div class="vl" style="left:1051px;top:207px;height:20px;background:#383b3d"></div>
<div class="vl" style="left:1051px;top:228px;height:425px"></div>
<div class="vl" style="left:1133px;top:207px;height:20px;background:#383b3d"></div>
<div class="vl" style="left:1133px;top:228px;height:425px"></div>
<div class="hl" style="left:310px;top:243px;width:905px"></div>
<div class="hl" style="left:310px;top:259px;width:905px"></div>
<div class="hl" style="left:310px;top:653px;width:905px;background:#36393b"></div>
<span class="t" style="left:340.5px;top:222px;transform:scaleX(0.8868);">Label</span>
<span class="t" style="left:412.5px;top:222px;transform:scaleX(0.8931);"># Samples</span>
<span class="t" style="left:499.5px;top:222px;transform:scaleX(0.9021);">Average</span>
<span class="t" style="left:590.75px;top:222px;transform:scaleX(1.0202);">Min</span>
<span class="t" style="left:672.5px;top:222px;transform:scaleX(0.9098);">Max</span>
<span class="t" style="left:745px;top:222px;transform:scaleX(0.9086);">Std. Dev.</span>
<span class="t" style="left:830.5px;top:222px;transform:scaleX(0.8833);">Error %</span>
<span class="t" style="left:904.4px;top:222px;transform:scaleX(0.95);">Throughput</span>
<span class="t" style="left:976.5px;top:222px;transform:scaleX(0.8824);">Received KB/sec</span>
<span class="t" style="left:1067.5px;top:222px;transform:scaleX(0.885);">Sent KB/sec</span>
<span class="t" style="left:1153.25px;top:222px;transform:scaleX(0.9123);">Avg. Bytes</span>
<span class="t" style="left:315.5px;top:239px;transform:scaleX(0.9083);">Load - Balancer...</span>
<span class="t" style="left:447px;top:239px;transform:scaleX(0.8431);">94050</span>
<span class="t" style="left:548.75px;top:239px;transform:scaleX(0.7101);">6</span>
<span class="t" style="left:630.5px;top:239px;transform:scaleX(0.7551);">2</span>
<span class="t" style="left:699.5px;top:239px;transform:scaleX(0.818);">1249</span>
<span class="t" style="left:783.75px;top:239px;transform:scaleX(0.8193);">7.77</span>
<span class="t" style="left:857.5px;top:239px;transform:scaleX(0.8533);">0.00%</span>
<span class="t" style="left:921.5px;top:239px;transform:scaleX(0.8725);">1548.9/sec</span>
<span class="t" style="left:1020.75px;top:239px;transform:scaleX(0.8319);">180.00</span>
<span class="t" style="left:1103.25px;top:239px;transform:scaleX(0.8319);">226.89</span>
<span class="t" style="left:1190.75px;top:239px;transform:scaleX(0.8108);">119.0</span>
<span class="t" style="left:315.5px;top:255px;transform:scaleX(0.8367);">TOTAL</span>
<span class="t" style="left:447px;top:255px;transform:scaleX(0.8431);">94050</span>
<span class="t" style="left:548.75px;top:255px;transform:scaleX(0.7101);">6</span>
<span class="t" style="left:630.5px;top:255px;transform:scaleX(0.7551);">2</span>
<span class="t" style="left:699.5px;top:255px;transform:scaleX(0.818);">1249</span>
<span class="t" style="left:783.75px;top:255px;transform:scaleX(0.8193);">7.77</span>
<span class="t" style="left:857.5px;top:255px;transform:scaleX(0.8533);">0.00%</span>
<span class="t" style="left:921.5px;top:255px;transform:scaleX(0.8725);">1548.9/sec</span>
<span class="t" style="left:1020.75px;top:255px;transform:scaleX(0.8319);">180.00</span>
<span class="t" style="left:1103.25px;top:255px;transform:scaleX(0.8319);">226.89</span>
<span class="t" style="left:1190.75px;top:255px;transform:scaleX(0.8108);">119.0</span>
<div class="cb" style="left:597.5px;top:663px;width:11.5px;height:11.5px"></div>
<span class="t" style="left:613.7px;top:673px;transform:scaleX(0.9499);">Include group name in label?</span>
<div class="btn" style="left:742px;top:660px;width:88px;height:18.5px"></div>
<span class="t" style="left:753px;top:674px;transform:scaleX(0.8907);">Save Table Data</span>
<div class="cb" style="left:840px;top:663px;width:11.5px;height:11.5px"></div>
<svg style="left:840px;top:663px" width="12" height="12" viewBox="0 0 12 12"><path d="M2.6 6.2L5 8.8L9.4 2.6" fill="none" stroke="#bbb" stroke-width="1.6"/></svg>
<span class="t" style="left:856.5px;top:673px;transform:scaleX(0.8978);">Save Table Header</span>
<div style="left:2px;top:31px;width:1213px;height:652px;box-sizing:border-box;border:1px solid #35383a;border-top:none;border-radius:0 0 7px 7px"></div>
</div></div>
</body></html>
